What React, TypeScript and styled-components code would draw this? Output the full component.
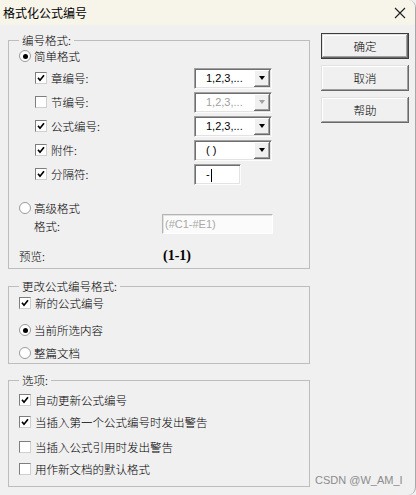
import React from "react";
import styled, { createGlobalStyle } from "styled-components";

const Global = createGlobalStyle`
  html, body { margin: 0; padding: 0; background: #f0f0f0; }
  body { font-family: "Noto Sans CJK SC", "Noto Sans", sans-serif; }
`;

const Window = styled.div`
  position: relative;
  width: 416px;
  height: 495px;
  box-sizing: border-box;
  background: #f0f0f0;
  border-right: 1px solid #a8a8a8;
  border-top-right-radius: 8px;
  border-bottom-right-radius: 8px;
  overflow: hidden;
  font-family: "Noto Sans CJK SC", sans-serif;
  font-size: 11.5px;
  font-weight: 300;
  color: #000;
`;

const TitleBar = styled.div`
  height: 25px;
  display: flex;
  align-items: center;
  justify-content: space-between;
  background: #f7f4ea;
  padding: 0 9px 0 3px;
`;

const TitleText = styled.span`
  font-size: 12px;
  font-weight: 400;
  line-height: 16px;
`;

const Body = styled.div`
  display: flex;
  gap: 11px;
  padding: 7px 0 0 8px;
`;

const LeftCol = styled.div`
  width: 302px;
  display: flex;
  flex-direction: column;
`;

const Group = styled.fieldset<{ $mt?: number }>`
  margin: ${(p) => p.$mt ?? 0}px 0 0;
  padding: 0;
  min-width: 0;
  border: 1px solid #bdbdbd;
`;

const Legend = styled.legend`
  margin-left: 10px;
  padding: 0 3px;
  height: 16px;
  line-height: 16px;
  font-size: 11.5px;
`;

const GroupBody = styled.div<{ $pb: number }>`
  display: flex;
  flex-direction: column;
  padding: 0 0 ${(p) => p.$pb}px 10px;
`;

const Row = styled.div<{ $h: number; $mt?: number; $indent?: number }>`
  display: flex;
  align-items: center;
  height: ${(p) => p.$h}px;
  margin-top: ${(p) => p.$mt ?? 0}px;
  padding-left: ${(p) => p.$indent ?? 0}px;
  line-height: 16px;
  white-space: nowrap;
`;

const Label = styled.span<{ $w?: number; $gap?: number; $pl?: number }>`
  display: inline-block;
  box-sizing: border-box;
  margin-left: ${(p) => p.$gap ?? 0}px;
  padding-left: ${(p) => p.$pl ?? 0}px;
  ${(p) => (p.$w ? `width: ${p.$w}px;` : "")}
`;

const LowLabel = styled(Label)`
  align-self: flex-end;
`;

const Box = styled.span`
  width: 12px;
  height: 12px;
  box-sizing: border-box;
  flex: none;
  display: inline-flex;
  align-items: center;
  justify-content: center;
  background: #fff;
  border: 1px solid;
  border-color: #7e7e7e #cfcfcf #cfcfcf #7e7e7e;
`;

const Circle = styled.span`
  width: 12px;
  height: 12px;
  box-sizing: border-box;
  flex: none;
  border-radius: 50%;
  display: inline-flex;
  align-items: center;
  justify-content: center;
  background: #fff;
  border: 1px solid #9a9a9a;
`;

const Dot = styled.span`
  width: 5px;
  height: 5px;
  border-radius: 50%;
  background: #000;
`;

const Checkbox = ({ checked }: { checked?: boolean }) => (
  <Box>
    {checked && (
      <svg width="8" height="8" viewBox="0 0 8 8">
        <polyline points="1,3.8 3,6.2 7,1.2" fill="none" stroke="#000" strokeWidth="1.7" />
      </svg>
    )}
  </Box>
);

const Radio = ({ checked }: { checked?: boolean }) => <Circle>{checked && <Dot />}</Circle>;

const Sunken = styled.div<{ $w: number; $h: number; $disabled?: boolean }>`
  width: ${(p) => p.$w}px;
  height: ${(p) => p.$h}px;
  box-sizing: border-box;
  flex: none;
  display: flex;
  align-items: center;
  background: #fff;
  border: 1px solid;
  border-color: #a0a0a0 #fcfcfc #fcfcfc #a0a0a0;
  box-shadow: inset 1px 1px #6f6f6f, inset -1px -1px #e3e3e3;
  font-family: "Liberation Sans", Arial, sans-serif;
  font-weight: 400;
  font-size: 11px;
  color: ${(p) => (p.$disabled ? "#a0a0a0" : "#000")};
`;

const ComboText = styled.span`
  flex: 1;
  padding-left: 11px;
`;

const ArrowBtn = styled.span<{ $disabled?: boolean }>`
  width: 16px;
  height: 17px;
  box-sizing: border-box;
  margin-right: 1px;
  display: flex;
  align-items: center;
  justify-content: center;
  background: #f0f0f0;
  box-shadow: inset -1px -1px #696969, inset 1px 1px #ffffff, inset -2px -2px #a0a0a0;
  &::after {
    content: "";
    border-left: 3.5px solid transparent;
    border-right: 3.5px solid transparent;
    border-top: 4px solid ${(p) => (p.$disabled ? "#a0a0a0" : "#000")};
  }
`;

const Combo = ({ value, disabled }: { value: string; disabled?: boolean }) => (
  <Sunken $w={78} $h={21} $disabled={disabled}>
    <ComboText>{value}</ComboText>
    <ArrowBtn $disabled={disabled} />
  </Sunken>
);

const Caret = styled.span`
  display: inline-block;
  width: 1px;
  height: 13px;
  margin-left: 1px;
  background: #000;
  vertical-align: middle;
`;

const FlatField = styled.div`
  width: 111px;
  height: 20px;
  box-sizing: border-box;
  display: flex;
  align-items: center;
  padding-left: 2px;
  background: #fbfbfb;
  border: 1px solid;
  border-color: #b4b4b4 #ffffff #ffffff #b4b4b4;
  box-shadow: inset 1px 1px #e2e2e2;
  font-family: "Liberation Sans", Arial, sans-serif;
  font-weight: 400;
  font-size: 11px;
  color: #a8a8a8;
`;

const Preview = styled.span`
  font-family: "Liberation Serif", serif;
  font-weight: bold;
  font-size: 14px;
  line-height: 16px;
`;

const ButtonCol = styled.div`
  display: flex;
  flex-direction: column;
  gap: 6px;
  margin-top: 1px;
`;

const Button = styled.button<{ $default?: boolean }>`
  width: 88px;
  height: 26px;
  box-sizing: border-box;
  padding: 0;
  font-family: "Noto Sans CJK SC", sans-serif;
  font-weight: 300;
  font-size: 11.5px;
  color: #000;
  background: #f0f0f0;
  border: ${(p) => (p.$default ? "1px solid #3c3c3c" : "none")};
  box-shadow: inset -1px -1px #696969, inset 1px 1px #e3e3e3, inset -2px -2px #a0a0a0, inset 2px 2px #ffffff;
`;

const Watermark = styled.span`
  position: absolute;
  left: 315px;
  top: 473px;
  font-family: "Liberation Sans", Arial, sans-serif;
  font-weight: 400;
  font-size: 11px;
  line-height: 14px;
  color: #8c8c8c;
`;

const CloseIcon = () => (
  <svg width="12" height="12" viewBox="0 0 12 12">
    <path d="M1 1 L11 11 M11 1 L1 11" stroke="#1e1e1e" strokeWidth="1.1" fill="none" />
  </svg>
);

type NumRow = { label: string; checked: boolean; value: string; disabled?: boolean };
const numRows: NumRow[] = [
  { label: "章编号:", checked: true, value: "1,2,3,..." },
  { label: "节编号:", checked: false, value: "1,2,3,...", disabled: true },
  { label: "公式编号:", checked: true, value: "1,2,3,..." },
  { label: "附件:", checked: true, value: "( )" },
];

export default function App() {
  return (
    <Window>
      <Global />
      <TitleBar>
        <TitleText>格式化公式编号</TitleText>
        <CloseIcon />
      </TitleBar>
      <Body>
        <LeftCol>
          <Group>
            <Legend>编号格式:</Legend>
            <GroupBody $pb={4}>
              <Row $h={16}>
                <Radio checked />
                <Label $gap={3}>简单格式</Label>
              </Row>
              {numRows.map((r, i) => (
                <Row key={r.label} $h={24} $mt={i === 0 ? 2 : 0} $indent={16}>
                  <Checkbox checked={r.checked} />
                  <Label $gap={4} $w={143}>{r.label}</Label>
                  <Combo value={r.value} disabled={r.disabled} />
                </Row>
              ))}
              <Row $h={24} $indent={16}>
                <Checkbox checked />
                <Label $gap={4} $w={143}>分隔符:</Label>
                <Sunken $w={47} $h={21}>
                  <ComboText>
                    -<Caret />
                  </ComboText>
                </Sunken>
              </Row>
              <Row $h={16} $mt={14}>
                <Radio />
                <Label $gap={3}>高级格式</Label>
              </Row>
              <Row $h={20} $mt={-2}>
                <LowLabel $w={143} $pl={15}>格式:</LowLabel>
                <FlatField>(#C1-#E1)</FlatField>
              </Row>
              <Row $h={16} $mt={14}>
                <Label $w={144}>预览:</Label>
                <Preview>(1-1)</Preview>
              </Row>
            </GroupBody>
          </Group>

          <Group $mt={9}>
            <Legend>更改公式编号格式:</Legend>
            <GroupBody $pb={1}>
              <Row $h={18}>
                <Checkbox checked />
                <Label $gap={4}>新的公式编号</Label>
              </Row>
              <Row $h={18} $mt={9}>
                <Radio checked />
                <Label $gap={3}>当前所选内容</Label>
              </Row>
              <Row $h={18} $mt={5}>
                <Radio />
                <Label $gap={3}>整篇文档</Label>
              </Row>
            </GroupBody>
          </Group>

          <Group $mt={8}>
            <Legend>选项:</Legend>
            <GroupBody $pb={8}>
              <Row $h={18} $mt={3}>
                <Checkbox checked />
                <Label $gap={4}>自动更新公式编号</Label>
              </Row>
              <Row $h={18} $mt={4}>
                <Checkbox checked />
                <Label $gap={4}>当插入第一个公式编号时发出警告</Label>
              </Row>
              <Row $h={18} $mt={7}>
                <Checkbox />
                <Label $gap={4}>当插入公式引用时发出警告</Label>
              </Row>
              <Row $h={18} $mt={4}>
                <Checkbox />
                <Label $gap={4}>用作新文档的默认格式</Label>
              </Row>
            </GroupBody>
          </Group>
        </LeftCol>
        <ButtonCol>
          <Button $default>确定</Button>
          <Button>取消</Button>
          <Button>帮助</Button>
        </ButtonCol>
      </Body>
      <Watermark>CSDN @W_AM_I</Watermark>
    </Window>
  );
}
